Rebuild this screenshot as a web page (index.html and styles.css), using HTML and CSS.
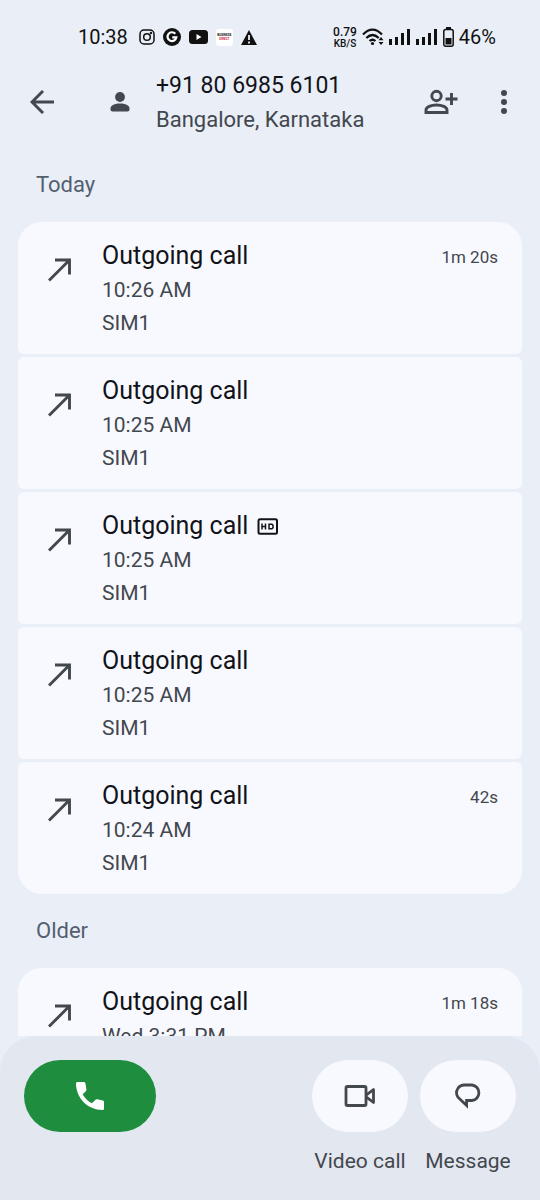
FILE: index.html
```html
<!DOCTYPE html>
<html lang="en">
<head>
<meta charset="utf-8">
<meta name="viewport" content="width=device-width, initial-scale=1">
<title>Call history</title>
<link rel="stylesheet" href="styles.css">
</head>
<body>
<svg class="defs" aria-hidden="true">
  <symbol id="outgoing" viewBox="0 0 24 24"><path d="M1 22.500 21 2.500M7 2H21.500V16.500" fill="none" stroke="currentColor" stroke-width="2.900"/></symbol>
  <symbol id="signal" viewBox="0 0 22 16"><path d="M0 10h3v6H0zM6 8h3v8H6zM12 4h3v12h-3zM18 0h3v16h-3z" fill="currentColor"/></symbol>
</svg>
<div class="app">
  <div class="status">
    <span class="clock">10:38</span>
    <div class="notices">
      <svg width="16" height="16" viewBox="0 0 16 16" fill="none" stroke="currentColor" stroke-width="1.500"><rect x="1" y="1" width="14" height="14" rx="4"/><circle cx="8" cy="8" r="3.300"/><circle cx="12" cy="4" r=".5"/></svg>
      <svg width="18" height="18" viewBox="0 0 18 18"><circle cx="9" cy="9" r="9" fill="currentColor"/><path d="M12.300 5.800A4.400 4.400 0 1 0 13.300 9.300H9.300" fill="none" stroke="#fff" stroke-width="2.200"/></svg>
      <svg width="19" height="14" viewBox="0 0 19 14"><rect width="19" height="14" rx="3.500" fill="currentColor"/><path d="M7.500 4v6l5-3z" fill="#fff"/></svg>
      <span class="news"><b>BUSINESS</b><b class="red">DIRECT</b></span>
      <svg width="16" height="15" viewBox="0 0 16 15"><path d="M8 0 16 15H0z" fill="currentColor"/><path d="M8 5v5M8 11.500v2" stroke="#fff" stroke-width="1.700"/></svg>
    </div>
    <div class="system">
      <span class="speed"><span>0.79</span><span class="unit">KB/S</span></span>
      <svg width="22" height="18" viewBox="0 0 22 18" fill="none" stroke="currentColor" stroke-width="2.200"><path d="M1 6.500Q10.500-3 20 6.500M4.300 10Q10.500 4 16.700 10M7.500 13Q10.500 10.500 13.500 13"/><circle cx="10.500" cy="15.500" r="1.600" fill="currentColor" stroke="none"/><path d="M19 9l2.500 3.200h-5zM19 17l2.500-3h-5z" fill="currentColor" stroke="none"/></svg>
      <svg width="22" height="16"><use href="#signal"/></svg>
      <svg width="22" height="16"><use href="#signal"/></svg>
      <svg width="11" height="20" viewBox="0 0 11 20"><path d="M3 0h5v2H3z" fill="currentColor"/><rect x=".8" y="2.500" width="9.400" height="16.700" rx="2" fill="none" stroke="currentColor" stroke-width="1.500"/><path d="M2.500 11h6v6.500h-6z" fill="currentColor"/></svg>
      <span class="percent">46%</span>
    </div>
  </div>

  <header class="bar">
    <button class="icon" aria-label="Back"><svg width="24" height="24" viewBox="0 0 24 24" fill="none" stroke="currentColor" stroke-width="2.900"><path d="M24 12H2M13 1 2 12 13 23"/></svg></button>
    <svg class="person" width="20" height="20" viewBox="0 0 20 20" fill="currentColor"><circle cx="10" cy="5" r="4.900"/><path d="M.5 17.500V16.500C.5 13 5 11.500 10 11.500S19.500 13 19.500 16.500V17.500Q19.500 19.500 17.500 19.500H2.500Q.5 19.500 .5 17.500z"/></svg>
    <div class="contact">
      <h1>+91 80 6985 6101</h1>
      <p>Bangalore, Karnataka</p>
    </div>
    <button class="icon add" aria-label="Add contact"><svg width="34" height="26" viewBox="0 0 34 26" fill="none" stroke="currentColor" stroke-width="2.900"><circle cx="12.500" cy="7" r="4.700"/><path d="M2 23.500V21C2 18 7 16 12.500 16S23 18 23 21V23.500zM21.500 10h12M27.500 4v12"/></svg></button>
    <button class="icon more" aria-label="More options"><svg width="8" height="24" viewBox="0 0 8 24" fill="currentColor"><circle cx="4" cy="3" r="3"/><circle cx="4" cy="12" r="3"/><circle cx="4" cy="21" r="3"/></svg></button>
  </header>

  <main class="history">
    <h2>Today</h2>
    <ul class="calls">
      <li><svg class="arrow"><use href="#outgoing"/></svg><div class="details"><h3>Outgoing call</h3><p>10:26 AM</p><p>SIM1</p></div><span class="length">1m 20s</span></li>
      <li><svg class="arrow"><use href="#outgoing"/></svg><div class="details"><h3>Outgoing call</h3><p>10:25 AM</p><p>SIM1</p></div></li>
      <li><svg class="arrow"><use href="#outgoing"/></svg><div class="details"><h3>Outgoing call <svg width="22" height="17" viewBox="0 0 22 17" fill="none" stroke="currentColor" role="img" aria-label="HD"><rect x="1.500" y="1.200" width="18.500" height="14.600" rx="1.500" stroke-width="2"/><path d="M5 5.500v6M8.500 5.500v6M5 8.500h3.500M12 6.200h3l1 1v2.600l-1 1h-3z" stroke-width="1.500"/></svg></h3><p>10:25 AM</p><p>SIM1</p></div></li>
      <li><svg class="arrow"><use href="#outgoing"/></svg><div class="details"><h3>Outgoing call</h3><p>10:25 AM</p><p>SIM1</p></div></li>
      <li><svg class="arrow"><use href="#outgoing"/></svg><div class="details"><h3>Outgoing call</h3><p>10:24 AM</p><p>SIM1</p></div><span class="length">42s</span></li>
    </ul>
    <h2>Older</h2>
    <ul class="calls">
      <li><svg class="arrow"><use href="#outgoing"/></svg><div class="details"><h3>Outgoing call</h3><p>Wed 3:31 PM</p><p>SIM1</p></div><span class="length">1m 18s</span></li>
    </ul>
  </main>

  <footer class="actions">
    <button class="pill call" aria-label="Call"><svg width="28" height="28" viewBox="0 0 18 18" fill="currentColor"><path d="M17.200 11.900 13.700 11.100C13.200 11 12.700 11.100 12.400 11.500L10.200 13.700C7.900 12.500 5.500 10.100 4.300 7.800L6.300 5.900C6.600 5.600 6.800 5.200 6.700 4.700L6.100 1C6 .4 5.500 0 4.900 0H1C.4 0 0 .45 0 1 0 10.400 7.600 18 17 18 17.600 18 18 17.600 18 17V12.900C18 12.400 17.700 12 17.200 11.900z"/></svg></button>
    <div class="action">
      <button class="pill" aria-labelledby="video"><svg width="32" height="22" viewBox="0 0 32 22" fill="none" stroke="currentColor" stroke-width="2.800" stroke-linejoin="round"><rect x="2" y="1.500" width="20" height="19" rx="1.500"/><path d="M22.500 9.800 29.500 4.500V17.500L22.500 12.200"/></svg></button>
      <span id="video">Video call</span>
    </div>
    <div class="action">
      <button class="pill" aria-labelledby="message"><svg width="28" height="26" viewBox="0 0 28 26" fill="none" stroke="currentColor" stroke-width="2.800"><path d="M12.600 22.500V17.500H18A7.800 7.800 0 0 0 18 2H10.500A7.800 7.800 0 0 0 3.700 13.800Q4.300 14.700 5.300 15.500z"/></svg></button>
      <span id="message">Message</span>
    </div>
  </footer>
</div>
</body>
</html>
```
FILE: styles.css
```css
* { box-sizing: border-box; margin: 0; padding: 0; }
body { background: #e9eef7; color: #111318; font-family: Roboto, "Open Sans", sans-serif; }
h1, h2, h3 { font-weight: 400; }
button { border: 0; background: none; color: inherit; font: inherit; cursor: pointer; }
svg { display: block; flex: none; }
.defs { position: absolute; width: 0; height: 0; }
.app { display: flex; flex-direction: column; height: 100vh; }

.status { display: flex; align-items: center; flex: none; height: 68px; padding: 6px 44px 0 78px; color: #111; }
.clock { font-size: 20px; }
.notices { display: flex; align-items: center; gap: 8px; margin-left: 11px; }
.news { display: flex; flex-direction: column; align-items: center; justify-content: center; width: 17px; height: 17px; border-radius: 3px; background: #fff; font-size: 3px; line-height: 4px; }
.news .red { color: #d32040; }
.system { display: flex; align-items: center; gap: 5px; margin-left: auto; }
.speed { display: flex; flex-direction: column; align-items: center; font-size: 12px; line-height: 12px; font-weight: 500; }
.unit { font-size: 10px; line-height: 11px; }
.percent { font-size: 20px; }

.bar { display: flex; align-items: center; flex: none; height: 80px; padding: 0 20px 12px; color: #43474e; }
.icon { display: flex; align-items: center; justify-content: center; width: 44px; height: 48px; }
.person { margin: 0 26px 0 46px; }
.contact { flex: 1; padding-top: 2px; }
.contact h1 { color: #111318; font-size: 23px; line-height: 34px; }
.contact p { font-size: 22px; line-height: 34px; }
.more { width: 32px; margin-left: 25px; }

.history { flex: 1; min-height: 0; overflow: hidden; padding: 0 18px; }
.history h2 { padding: 0 18px; color: #535f70; font-size: 22px; line-height: 74px; }
.calls { display: flex; flex-direction: column; gap: 3px; list-style: none; }
.calls li { display: flex; padding: 16px 24px 14px 30px; border-radius: 6px; background: #f8f9ff; color: #43474e; }
.calls li:first-child { border-top-left-radius: 24px; border-top-right-radius: 24px; }
.calls li:last-child { border-bottom-left-radius: 24px; border-bottom-right-radius: 24px; }
.arrow { width: 24px; height: 24px; margin: 20px 30px 0 0; }
.details { flex: 1; font-size: 21px; line-height: 33px; }
.details h3 { display: flex; align-items: center; gap: 9px; color: #111318; font-size: 25px; line-height: 36px; }
.length { font-size: 17px; line-height: 38px; }

.actions { display: flex; align-items: flex-start; flex: none; gap: 12px; padding: 24px 24px 22px; border-radius: 36px 36px 0 0; background: #e2e7f0; color: #43474e; }
.pill { display: flex; align-items: center; justify-content: center; width: 96px; height: 72px; border-radius: 36px; background: #f8f9ff; }
.call { width: 132px; margin-right: auto; background: #1e8e3e; color: #fff; }
.action { width: 96px; font-size: 21px; line-height: 34px; text-align: center; white-space: nowrap; }
.action span { display: block; padding-top: 12px; }
```
